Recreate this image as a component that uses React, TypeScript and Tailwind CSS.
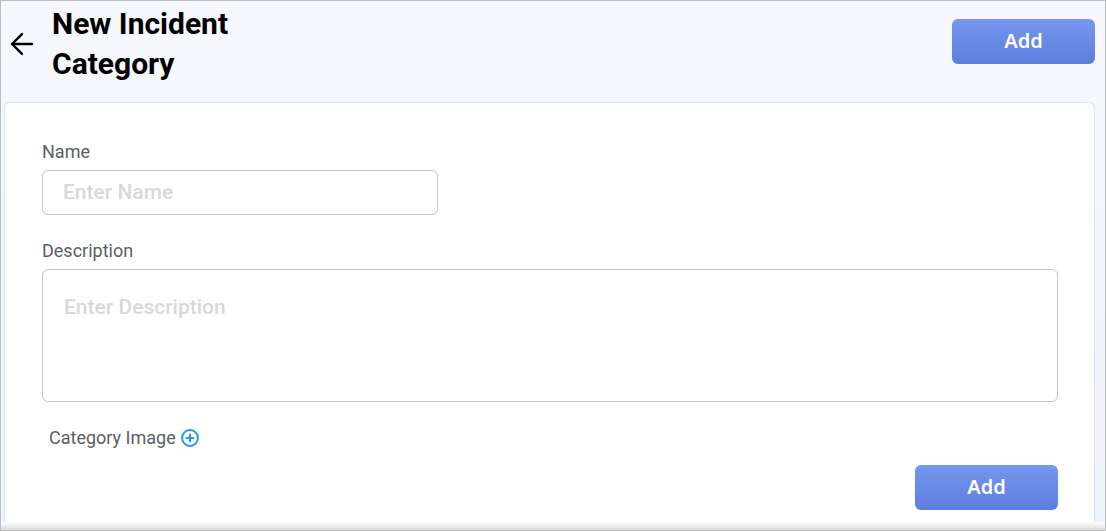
import React from 'react';
import { ArrowLeft } from 'lucide-react';

const AddButton: React.FC<{ className: string }> = ({ className }) => (
  <button className={`flex h-[45px] items-center justify-center rounded-[6px] bg-gradient-to-b from-[#7697ef] to-[#5d7fdc] pb-[2px] font-['Noto_Sans',sans-serif] text-[20px] font-semibold text-white ${className}`}>
    Add
  </button>
);

export default function App() {
  return (
    <div className="flex h-[531px] w-[1106px] flex-col overflow-hidden border border-[#bdbdbd] bg-gradient-to-b from-[#f6f8fd] to-[#eef3f9] font-['Roboto',sans-serif]">
      {/* Header */}
      <div className="flex h-[101px] shrink-0 items-start justify-between pr-[10px]">
        <div className="flex items-start">
          <div className="pl-[4px] pt-[26px]">
            <ArrowLeft size={34} strokeWidth={1.7} className="text-black" />
          </div>
          <h1 className="ml-[13px] mt-[3px] w-[200px] text-[30px] font-bold leading-[40px] text-black">
            New Incident Category
          </h1>
        </div>
        <AddButton className="mt-[18px] w-[143px]" />
      </div>

      {/* Form card */}
      <div className="ml-[3px] mr-[10px] flex-1 rounded-t-[6px] border border-b-0 border-[#cfe6fb] bg-white pl-[37px] pr-[36px] pt-[37px]">
        <label className="block text-[18px] leading-[24px] text-[#5a5f66]">Name</label>
        <input
          placeholder="Enter Name"
          className="mt-[6px] block h-[45px] w-[396px] rounded-[6px] border border-[#c4c4c4] px-[20px] pb-[2px] text-[21px] font-medium outline-none placeholder:text-[#d8d8d8]"
        />
        <label className="mt-[24px] block text-[18px] leading-[24px] text-[#5a5f66]">Description</label>
        <textarea
          placeholder="Enter Description"
          className="mt-[6px] block h-[133px] w-[1016px] resize-none rounded-[6px] border border-[#c4c4c4] px-[21px] py-[24px] text-[21px] font-medium leading-[26px] outline-none placeholder:text-[#d8d8d8]"
        />
        <div className="ml-[7px] mt-[24px] flex items-center gap-[5px]">
          <span className="text-[18px] leading-[24px] text-[#5a5f66]">Category Image</span>
          <svg width="18" height="18" viewBox="0 0 18 18" fill="none" stroke="#2196f3" strokeWidth="2">
            <circle cx="9" cy="9" r="7.9" />
            <path d="M9 4.8v8.4M4.8 9h8.4" />
          </svg>
        </div>
        <div className="flex justify-end">
          <AddButton className="mt-[15px] w-[143px]" />
        </div>
      </div>

      {/* Bottom shadow */}
      <div className="h-[8px] shrink-0 bg-gradient-to-b from-[#fdfdfd] to-[#dedede]" />
    </div>
  );
}
